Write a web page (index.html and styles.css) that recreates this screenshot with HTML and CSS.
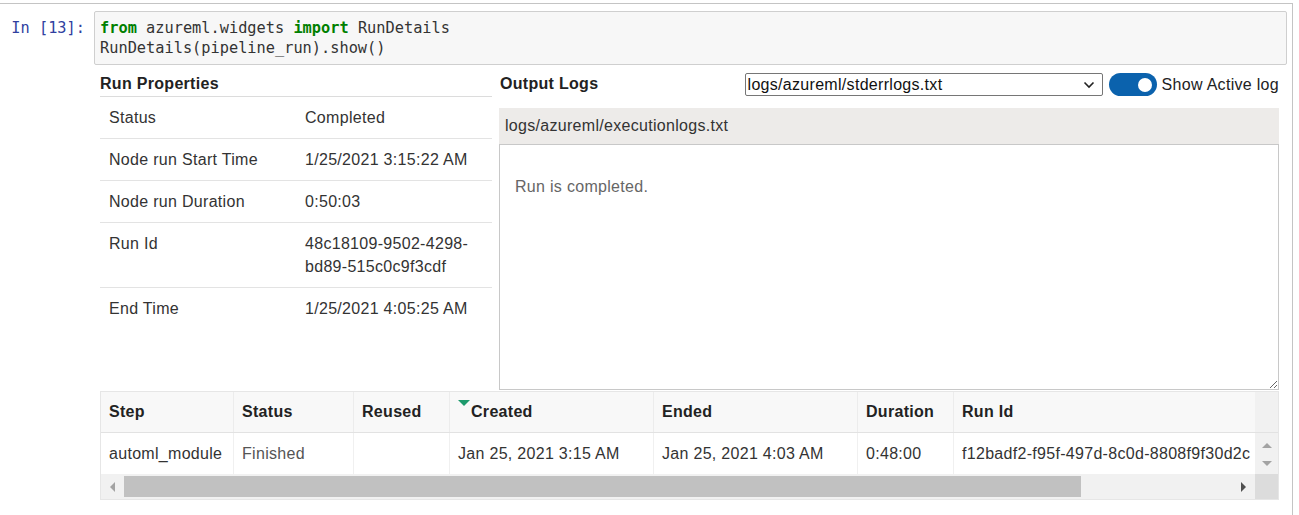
FILE: index.html
```html
<!DOCTYPE html>
<html>
<head>
<meta charset="utf-8">
<link rel="stylesheet" href="styles.css">
</head>
<body>
<div class="cell">
  <div class="input">
    <div class="prompt">In&nbsp;[13]:</div>
    <div class="code"><span class="kw">from</span> azureml.widgets <span class="kw">import</span> RunDetails<br>RunDetails(pipeline_run).show()</div>
  </div>
  <div class="output">
    <div class="widget">
      <div class="top">
        <div class="props">
          <div class="title">Run Properties</div>
          <div class="prop-row"><div class="k">Status</div><div class="v">Completed</div></div>
          <div class="prop-row"><div class="k">Node run Start Time</div><div class="v">1/25/2021 3:15:22 AM</div></div>
          <div class="prop-row"><div class="k">Node run Duration</div><div class="v">0:50:03</div></div>
          <div class="prop-row"><div class="k">Run Id</div><div class="v">48c18109-9502-4298-bd89-515c0c9f3cdf</div></div>
          <div class="prop-row last"><div class="k">End Time</div><div class="v">1/25/2021 4:05:25 AM</div></div>
        </div>
        <div class="logs">
          <div class="logs-head">
            <div class="title2">Output Logs</div>
            <div class="controls">
              <div class="select"><span>logs/azureml/stderrlogs.txt</span><svg class="chev" width="12" height="8" viewBox="0 0 12 8"><polyline points="1.5,1.5 6,6 10.5,1.5" fill="none" stroke="#222" stroke-width="1.6"/></svg></div>
              <div class="toggle"><span class="knob"></span></div>
              <span class="toggle-label">Show Active log</span>
            </div>
          </div>
          <div class="logbar">logs/azureml/executionlogs.txt</div>
          <textarea class="logtext" readonly>Run is completed.</textarea>
        </div>
      </div>
      <div class="grid">
        <div class="grow head">
          <div class="gc w-step">Step</div>
          <div class="gc w-status">Status</div>
          <div class="gc w-reused">Reused</div>
          <div class="gc w-created"><span class="sort"></span>Created</div>
          <div class="gc w-ended">Ended</div>
          <div class="gc w-dur">Duration</div>
          <div class="gc w-id">Run Id</div>
          <div class="vfill"></div>
        </div>
        <div class="grow body">
          <div class="gc w-step">automl_module</div>
          <div class="gc w-status muted">Finished</div>
          <div class="gc w-reused"></div>
          <div class="gc w-created">Jan 25, 2021 3:15 AM</div>
          <div class="gc w-ended">Jan 25, 2021 4:03 AM</div>
          <div class="gc w-dur">0:48:00</div>
          <div class="gc w-id">f12badf2-f95f-497d-8c0d-8808f9f30d2c</div>
          <div class="vscroll"><span class="arr-up"></span><span class="arr-down"></span></div>
        </div>
        <div class="hscroll">
          <div class="htrack">
            <div class="harrow"><span class="arr-left"></span></div>
            <div class="thumb"></div>
            <div class="hspace"></div>
            <div class="harrow"><span class="arr-right"></span></div>
          </div>
          <div class="corner"></div>
        </div>
      </div>
    </div>
  </div>
</div>
</body>
</html>
```

FILE: styles.css
```css
html, body {
  margin: 0;
  padding: 0;
  background: #fff;
  overflow: hidden;
}
body {
  font-family: "Liberation Sans", Arial, sans-serif;
  font-size: 16px;
  letter-spacing: 0.3px;
  color: #333;
}
.cell {
  margin-top: 3px;
  width: 1293px;
  height: 520px;
  box-sizing: border-box;
  border-top: 1px solid #c4c4c4;
  border-right: 1px solid #c4c4c4;
  padding-top: 7px;
}
.input {
  display: flex;
}
.prompt {
  flex: none;
  width: 94px;
  box-sizing: border-box;
  padding-top: 7px;
  padding-right: 9px;
  text-align: right;
  font: 15.3px/20px "DejaVu Sans Mono", monospace;
  letter-spacing: 0;
  color: #303f9f;
}
.code {
  flex: none;
  width: 1193px;
  box-sizing: border-box;
  border: 1px solid #cfcfcf;
  border-radius: 2px;
  background: #f7f7f7;
  padding: 6px 5px;
  font: 15.3px/20px "DejaVu Sans Mono", monospace;
  letter-spacing: 0;
  color: #333;
}
.kw {
  color: #008000;
  font-weight: bold;
}
.output {
  padding-left: 100px;
}
.widget {
  width: 1179px;
}
.top {
  display: flex;
  gap: 7px;
}
.props {
  flex: none;
  width: 392px;
}
.title {
  font-weight: bold;
  line-height: 18px;
  padding-top: 10px;
  padding-bottom: 3px;
  border-bottom: 1px solid #dcdcdc;
  color: #222;
}
.prop-row {
  display: flex;
  border-bottom: 1px solid #e3e3e3;
  line-height: 23px;
}
.prop-row.last {
  border-bottom: none;
}
.k {
  flex: none;
  width: 196px;
  box-sizing: border-box;
  padding: 9px;
}
.v {
  flex: 1;
  padding: 9px;
  min-width: 0;
}
.logs {
  flex: none;
  width: 780px;
}
.logs-head {
  height: 32px;
  display: flex;
  align-items: flex-end;
  justify-content: space-between;
}
.title2 {
  font-weight: bold;
  line-height: 18px;
  padding-bottom: 4px;
  padding-left: 1px;
  color: #222;
}
.controls {
  display: flex;
  align-items: center;
  margin-bottom: 1px;
}
.select {
  width: 358px;
  height: 23px;
  box-sizing: border-box;
  border: 1px solid #767676;
  border-radius: 2px;
  padding: 0 7px 0 2px;
  display: flex;
  align-items: center;
  justify-content: space-between;
  color: #111;
  line-height: 21px;
}
.chev {
  display: block;
}
.toggle {
  margin-left: 6px;
  width: 48px;
  height: 23px;
  border-radius: 12px;
  background: #0b62ad;
  display: flex;
  align-items: center;
  justify-content: flex-end;
  padding-right: 5px;
  box-sizing: border-box;
}
.knob {
  width: 14px;
  height: 14px;
  border-radius: 50%;
  background: #fff;
}
.toggle-label {
  margin-left: 5px;
  color: #222;
  line-height: 23px;
}
.logbar {
  margin-top: 11px;
  height: 36px;
  line-height: 36px;
  padding-left: 6px;
  background: #edebe9;
  color: #333;
}
.logtext {
  display: block;
  margin: 0;
  width: 780px;
  height: 246px;
  box-sizing: border-box;
  border: 1px solid #c8c8c8;
  border-radius: 0;
  padding: 33px 15px;
  font-family: "Liberation Sans", Arial, sans-serif;
  font-size: 16px;
  letter-spacing: 0.3px;
  line-height: 18px;
  color: #666;
  background: #fff;
  outline: none;
}
.grid {
  margin-top: 1px;
  width: 1179px;
  box-sizing: border-box;
  border: 1px solid #e6e6e6;
}
.grow {
  display: flex;
}
.grow.head {
  height: 40px;
  background: #f8f8f8;
  border-bottom: 1px solid #e2e2e2;
  font-weight: bold;
  color: #222;
}
.grow.body {
  height: 41px;
  background: #fff;
}
.gc {
  flex: none;
  box-sizing: border-box;
  padding: 0 8px;
  line-height: 40px;
  border-right: 1px solid #ececec;
  white-space: nowrap;
  overflow: hidden;
}
.grow.body .gc {
  line-height: 41px;
  border-right-color: #f0f0f0;
}
.muted {
  color: #555;
}
.w-step { width: 133px; }
.w-status { width: 120px; }
.w-reused { width: 96px; }
.w-created { width: 204px; }
.w-ended { width: 204px; }
.w-dur { width: 96px; }
.w-id { width: 301px; border-right: none; }
.sort {
  display: inline-block;
  width: 0;
  height: 0;
  border-left: 6px solid transparent;
  border-right: 6px solid transparent;
  border-top: 6px solid #1d9a6c;
  vertical-align: top;
  margin-top: 8px;
  margin-right: 1px;
}
.vfill {
  flex: none;
  width: 23px;
  background: #f1f1f1;
}
.vscroll {
  flex: none;
  width: 23px;
  background: #f1f1f1;
  display: flex;
  flex-direction: column;
  align-items: center;
  padding-top: 10px;
  box-sizing: border-box;
}
.arr-up {
  width: 0;
  height: 0;
  border-left: 5px solid transparent;
  border-right: 5px solid transparent;
  border-bottom: 5px solid #a3a3a3;
}
.arr-down {
  margin-top: 13px;
  width: 0;
  height: 0;
  border-left: 5px solid transparent;
  border-right: 5px solid transparent;
  border-top: 5px solid #a3a3a3;
}
.hscroll {
  display: flex;
  height: 25px;
}
.htrack {
  flex: none;
  width: 1154px;
  background: #f1f1f1;
  display: flex;
  align-items: center;
}
.harrow {
  flex: none;
  width: 23px;
  height: 25px;
  display: flex;
  align-items: center;
  justify-content: center;
}
.arr-left {
  width: 0;
  height: 0;
  border-top: 5px solid transparent;
  border-bottom: 5px solid transparent;
  border-right: 5px solid #a3a3a3;
}
.arr-right {
  width: 0;
  height: 0;
  border-top: 5px solid transparent;
  border-bottom: 5px solid transparent;
  border-left: 5px solid #505050;
}
.thumb {
  flex: none;
  width: 957px;
  height: 21px;
  background: #c1c1c1;
}
.hspace {
  flex: 1;
}
.corner {
  flex: none;
  width: 23px;
  background: #dcdcdc;
}
```
